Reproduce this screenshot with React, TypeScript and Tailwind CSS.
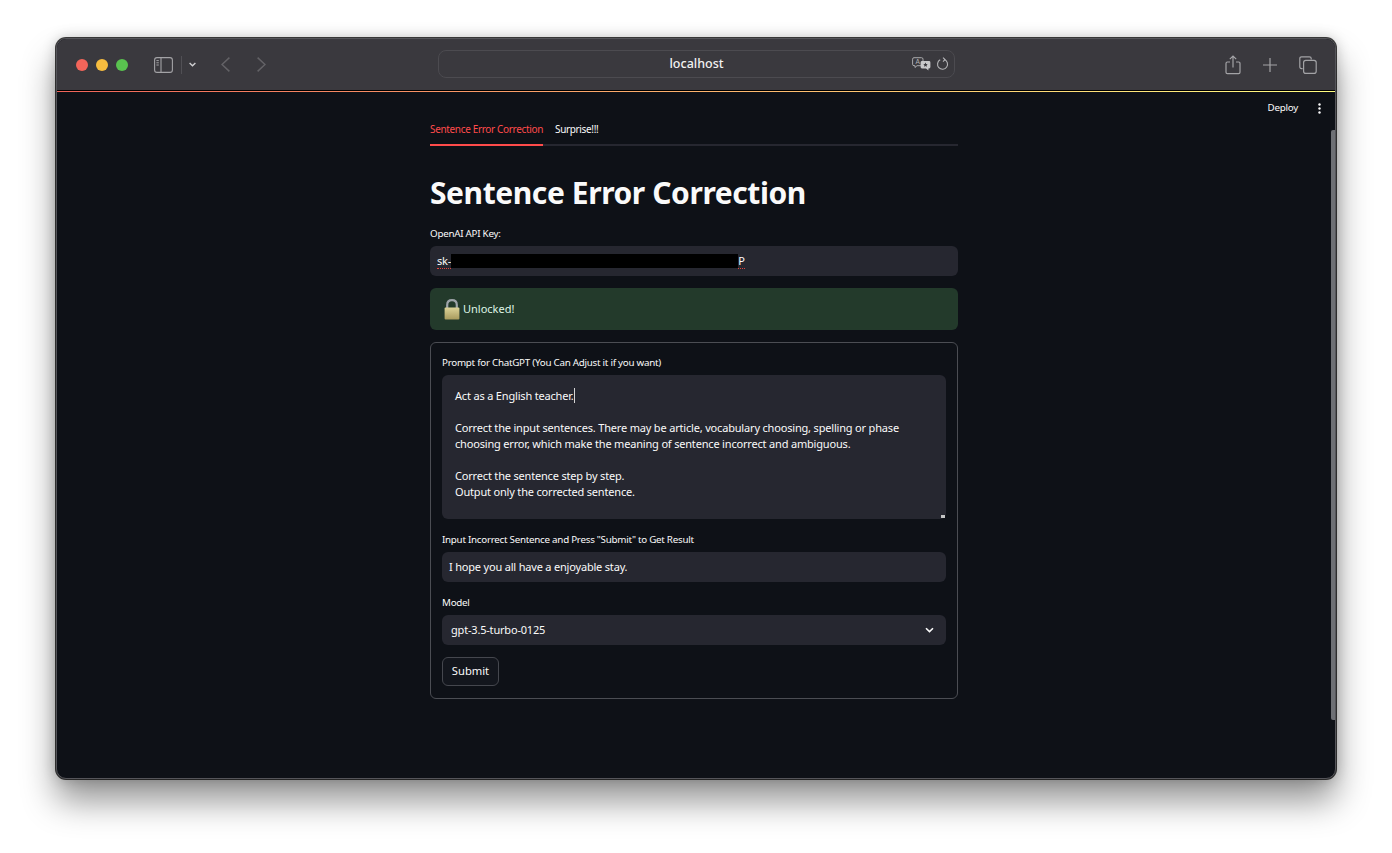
const font = "[font-family:'Noto_Sans','Open_Sans',sans-serif]"

function SidebarIcon() {
  return (
    <svg width="19" height="16" viewBox="0 0 19 16" fill="none" stroke="#a3a3a6" strokeWidth="1.1">
      <rect x="0.6" y="0.6" width="17.8" height="14.8" rx="2.4" />
      <path d="M7 0.6V15.4" />
      <path d="M2.4 3.6H4.8M2.4 5.8H4.8M2.4 8H4.8" strokeWidth="1" />
    </svg>
  )
}

function TranslateIcon() {
  return (
    <svg width="19" height="14" viewBox="0 0 19 14">
      <path d="M2 0.7H9.5Q11 0.7 11 2.2V7.2Q11 8.7 9.5 8.7H5L3 10.5V8.7H2Q0.6 8.7 0.6 7.2V2.2Q0.6 0.7 2 0.7Z" fill="none" stroke="#b5b5b8" strokeWidth="0.9" />
      <text x="3.4" y="7" fontSize="6.5" fill="#b5b5b8" fontFamily="Liberation Sans">A</text>
      <path d="M10 4H17Q18.4 4 18.4 5.4V10Q18.4 11.4 17 11.4H16.4V13.4L14 11.4H10Q8.6 11.4 8.6 10V5.4Q8.6 4 10 4Z" fill="#c8c8ca" />
      <path d="M13.5 5.6L14.2 7.1L15.7 7.2L14.6 8.2L15 9.8L13.5 9L12 9.8L12.4 8.2L11.3 7.2L12.8 7.1Z" fill="#3a393e" />
    </svg>
  )
}

function LockEmoji() {
  return (
    <svg width="16" height="21" viewBox="0 0 16 21">
      <defs>
        <linearGradient id="lockBody" x1="0" y1="0" x2="0" y2="1">
          <stop offset="0" stopColor="#dcd398" />
          <stop offset="1" stopColor="#a89b5e" />
        </linearGradient>
      </defs>
      <path d="M3.2 9V6C3.2 3 5.2 1.2 8 1.2C10.8 1.2 12.8 3 12.8 6V9" fill="none" stroke="#9da3a8" strokeWidth="2.2" />
      <rect x="0.6" y="8.4" width="14.8" height="12" rx="1" fill="url(#lockBody)" />
    </svg>
  )
}

function Field({ label, children }: { label: string; children: React.ReactNode }) {
  return (
    <div>
      <div className="flex h-[13px] items-center text-[9.8px] leading-[13px] tracking-[-0.26px] text-[#fafafa]">{label}</div>
      <div className="mt-[6px]">{children}</div>
    </div>
  )
}

function TextBox({ children, className = '' }: { children: React.ReactNode; className?: string }) {
  return (
    <div className={`flex h-[30px] items-center rounded-[6px] bg-[#262730] text-[11px] tracking-[-0.19px] text-[#fafafa] ${className}`}>
      {children}
    </div>
  )
}

function Squiggle({ children }: { children: React.ReactNode }) {
  return <span className="border-b border-dotted border-[#e2453f] leading-[14px]">{children}</span>
}

export default function App() {
  return (
    <div className={`h-[853px] w-[1392px] overflow-hidden bg-white pl-[56px] pt-[38px] ${font}`}>
      <div className="relative flex h-[741px] w-[1280px] flex-col overflow-hidden rounded-[10px] border border-[#55555a] bg-[#0e1117] shadow-[0_0_0_1px_rgba(0,0,0,0.75),0_22px_34px_rgba(0,0,0,0.42),0_0_14px_rgba(0,0,0,0.22)]">
        {/* safari toolbar */}
        <div className="relative flex h-[51px] shrink-0 items-center bg-[#3a393e]">
          <div className="flex w-[97px] items-center gap-[8px] pl-[19px]">
            <span className="h-3 w-3 rounded-full bg-[#f3655a]" />
            <span className="h-3 w-3 rounded-full bg-[#f7bd3f]" />
            <span className="h-3 w-3 rounded-full bg-[#59c24f]" />
          </div>
          <div className="flex items-center">
            <SidebarIcon />
            <span className="ml-[8px] h-[18px] w-px bg-[#515055]" />
            <svg className="ml-[7px]" width="7" height="5" viewBox="0 0 7 5" fill="none" stroke="#d0d0d2" strokeWidth="1.4">
              <path d="M0.6 1L3.5 3.8L6.4 1" />
            </svg>
            <svg className="ml-[25px]" width="9" height="15" viewBox="0 0 9 15" fill="none" stroke="#636266" strokeWidth="1.5">
              <path d="M8.4 0.6L1 7.5L8.4 14.4" />
            </svg>
            <svg className="ml-[27px]" width="9" height="15" viewBox="0 0 9 15" fill="none" stroke="#636266" strokeWidth="1.5">
              <path d="M0.6 0.6L8 7.5L0.6 14.4" />
            </svg>
          </div>
          <div className="mb-[2px] ml-[172px] flex h-[28px] w-[517px] items-center rounded-[8px] border border-[#4c4b50] bg-[#3a393e] pr-[5px]">
            <span className="flex-1 pl-[42px] pt-[2px] text-center text-[12.5px] font-medium text-[#f2f2f2]">localhost</span>
            <TranslateIcon />
            <svg className="ml-[5px]" width="13" height="14" viewBox="0 0 13 14" fill="none" stroke="#b5b5b8" strokeWidth="1.1">
              <path d="M4.2 2.8A5 5 0 1 0 8.2 2.5" />
              <path d="M7 0.6L9 2.6L7 4.6" />
            </svg>
          </div>
          <div className="ml-auto flex items-center pr-[18px]">
            <svg width="16" height="20" viewBox="0 0 16 20" fill="none" stroke="#a3a3a6" strokeWidth="1.2">
              <path d="M5 7H2.4Q1 7 1 8.4V17.2Q1 18.6 2.4 18.6H13.6Q15 18.6 15 17.2V8.4Q15 7 13.6 7H11" />
              <path d="M8 12.6V1.2M4.8 4.2L8 1L11.2 4.2" />
            </svg>
            <svg className="ml-[22px]" width="14" height="14" viewBox="0 0 14 14" stroke="#a3a3a6" strokeWidth="1.2">
              <path d="M7 0V14M0 7H14" />
            </svg>
            <svg className="ml-[22px]" width="18" height="18" viewBox="0 0 18 18" fill="none" stroke="#a3a3a6" strokeWidth="1.2">
              <path d="M3.6 12.6H2.6Q0.8 12.6 0.8 10.8V2.6Q0.8 0.8 2.6 0.8H10.4Q12.2 0.8 12.2 2.6V3.6" />
              <rect x="4.6" y="4.4" width="12.6" height="13" rx="2.2" />
            </svg>
          </div>
        </div>

        {/* black hairline and streamlit decoration */}
        <div className="h-px shrink-0 bg-black" />
        <div className="h-px shrink-0 bg-gradient-to-r from-[#f0645a] to-[#fffd80]" />

        {/* streamlit page */}
        <div className="relative flex min-h-0 flex-1 flex-col">
          <div className="flex h-[29px] shrink-0 items-center justify-end pr-[14px] pt-[4px] text-[9.8px] tracking-[-0.24px] text-[#fafafa]">
            <span>Deploy</span>
            <svg className="ml-[20px]" width="3" height="11" viewBox="0 0 3 11" fill="#fafafa">
              <circle cx="1.5" cy="1.5" r="1.2" />
              <circle cx="1.5" cy="5.5" r="1.2" />
              <circle cx="1.5" cy="9.5" r="1.2" />
            </svg>
          </div>

          <div className="ml-[373px] w-[528px]">
            <div className="flex h-[25px] gap-[12px] border-b-2 border-[#262730] text-[10px] tracking-[-0.34px]">
              <div className="-mb-[2px] h-[25px] border-b-2 border-[#ff4b4b] pt-[1px] leading-[14px] text-[#ff4b4b]">Sentence Error Correction</div>
              <div className="pt-[1px] leading-[14px] text-[#fafafa]">Surprise!!!</div>
            </div>

            <h1 className="mt-[29px] h-[36px] text-[30px] font-bold leading-[36px] tracking-[-0.42px] text-[#fafafa]">Sentence Error Correction</h1>

            <div className="mt-[16px]">
              <Field label="OpenAI API Key:">
                <TextBox className="pl-[7px]">
                  <Squiggle>sk-</Squiggle>
                  <span className="h-[14px] w-[287px] bg-black" />
                  <Squiggle>P</Squiggle>
                </TextBox>
              </Field>
            </div>

            <div className="mt-[12px] flex h-[42px] items-center rounded-[6px] bg-[#233a2b] pl-[14px] text-[11px] text-[#dff5e6]">
              <LockEmoji />
              <span className="ml-[3px]">Unlocked!</span>
            </div>

            <div className="mt-[12px] h-[357px] rounded-[6px] border border-[#4b4d53] px-[11px] pt-[13px]">
              <Field label="Prompt for ChatGPT (You Can Adjust it if you want)">
                <div className="relative h-[144px] rounded-[6px] bg-[#262730] px-[13px] pt-[13px] text-[11px] leading-[16px] tracking-[-0.18px] text-[#fafafa]">
                  <div className="flex">
                    <span>Act as a English teacher.</span>
                    <span className="h-[15px] w-px bg-[#d5d5d5]" />
                  </div>
                  <div className="mt-[16px]">
                    Correct the input sentences. There may be article, vocabulary choosing, spelling or phase
                    <br />
                    choosing error, which make the meaning of sentence incorrect and ambiguous.
                  </div>
                  <div className="mt-[16px]">
                    Correct the sentence step by step.
                    <br />
                    Output only the corrected sentence.
                  </div>
                  <span className="absolute bottom-[1px] right-[1px] h-[3px] w-[4px] bg-[#c4c4c4]" />
                </div>
              </Field>

              <div className="mt-[14px]">
                <Field label={'Input Incorrect Sentence and Press "Submit" to Get Result'}>
                  <TextBox className="pl-[7px]">I hope you all have a enjoyable stay.</TextBox>
                </Field>
              </div>

              <div className="mt-[14px]">
                <Field label="Model">
                  <TextBox className="justify-between pl-[9px] pr-[12px]">
                    <span>gpt-3.5-turbo-0125</span>
                    <svg width="9" height="6" viewBox="0 0 9 6" fill="none" stroke="#fafafa" strokeWidth="1.6">
                      <path d="M1 1.2L4.5 4.6L8 1.2" />
                    </svg>
                  </TextBox>
                </Field>
              </div>

              <button className="mt-[12px] h-[29px] w-[57px] rounded-[6px] border border-[#45474e] bg-[#13161d] text-[11.2px] text-[#fafafa]">Submit</button>
            </div>
          </div>

          {/* scrollbar */}
          <div className="absolute right-0 top-[38px] h-[590px] w-[4px] rounded-l-[2px] bg-[#6e7075]" />
        </div>
      </div>
    </div>
  )
}
